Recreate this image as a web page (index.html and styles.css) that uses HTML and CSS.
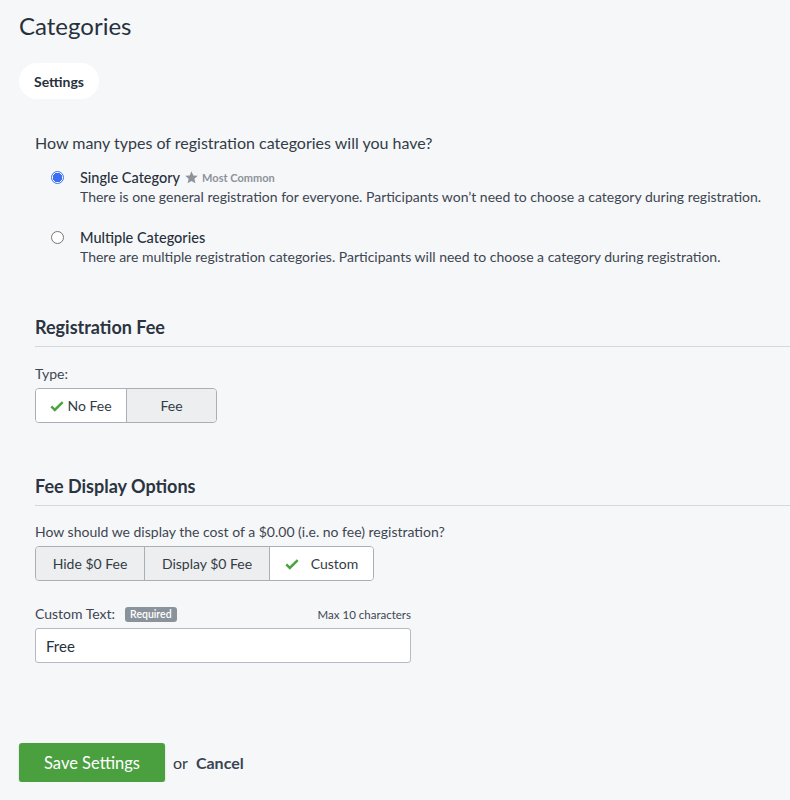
FILE: index.html
```html
<!DOCTYPE html>
<html>
<head>
<meta charset="utf-8">
<link rel="stylesheet" href="styles.css">
</head>
<body>
<div class="page">
  <h1 class="title">Categories</h1>
  <div class="tabs"><span class="tab">Settings</span></div>

  <div class="section">
    <p class="question">How many types of registration categories will you have?</p>
    <div class="options">
      <div class="option">
        <span class="radio checked"></span>
        <div class="option-text">
          <div class="option-label">Single Category
            <svg class="star" viewBox="0 0 24 24" width="15" height="15"><path d="M12 2l2.9 6.6 7.1.7-5.4 4.8 1.6 7-6.2-3.7-6.2 3.7 1.6-7L2 9.3l7.1-.7z" fill="#8d939a"/></svg><span class="common">Most Common</span></div>
          <div class="option-desc">There is one general registration for everyone. Participants won’t need to choose a category during registration.</div>
        </div>
      </div>
      <div class="option">
        <span class="radio"></span>
        <div class="option-text">
          <div class="option-label">Multiple Categories</div>
          <div class="option-desc">There are multiple registration categories. Participants will need to choose a category during registration.</div>
        </div>
      </div>
    </div>

    <h2 class="section-title fee-title">Registration Fee</h2>
    <div class="field-label type-label">Type:</div>
    <div class="btn-group">
      <span class="seg active seg-nofee"><svg class="check" viewBox="0 0 16 16" width="14" height="14"><path d="M1.5 8.5l4 4 9-9" fill="none" stroke="#4aa33e" stroke-width="2.8"/></svg>No Fee</span>
      <span class="seg seg-fee">Fee</span>
    </div>

    <h2 class="section-title display-title">Fee Display Options</h2>
    <div class="field-label">How should we display the cost of a $0.00 (i.e. no fee) registration?</div>
    <div class="btn-group">
      <span class="seg seg-hide">Hide $0 Fee</span>
      <span class="seg seg-display">Display $0 Fee</span>
      <span class="seg active seg-custom"><svg class="check check-wide" viewBox="0 0 16 16" width="14" height="14"><path d="M1.5 8.5l4 4 9-9" fill="none" stroke="#4aa33e" stroke-width="2.8"/></svg>Custom</span>
    </div>

    <div class="input-block">
      <div class="input-head">
        <span class="field-label">Custom Text:</span>
        <span class="badge">Required</span>
        <span class="max">Max 10 characters</span>
      </div>
      <div class="text-input">Free</div>
    </div>
  </div>

  <div class="actions">
    <span class="btn-save">Save Settings</span>
    <span class="or">or</span>
    <span class="cancel">Cancel</span>
  </div>
</div>
</body>
</html>
```

FILE: styles.css
```css
html, body {
  margin: 0;
  padding: 0;
  background: #f6f7f9;
}
body {
  font-family: Lato, "Open Sans", "Liberation Sans", sans-serif;
  color: #333c46;
}
.page {
  padding: 12px 0 0 19px;
}
.title {
  margin: 0;
  font-size: 24px;
  line-height: 28px;
  font-weight: 400;
  color: #27313c;
}
.tabs {
  margin-top: 23px;
  display: flex;
}
.tab {
  display: inline-flex;
  align-items: center;
  height: 36px;
  padding: 0 15px;
  background: #fff;
  border-radius: 18px;
  font-size: 14px;
  font-weight: 700;
  color: #27313c;
}
.section {
  padding-left: 16px;
}
.question {
  margin: 34px 0 0;
  font-size: 16px;
  line-height: 20px;
  color: #333c46;
}
.options {
  margin-top: 15px;
  display: flex;
  flex-direction: column;
  gap: 22px;
  padding-left: 16px;
}
.option {
  display: flex;
  align-items: flex-start;
  gap: 16px;
}
.radio {
  width: 11px;
  height: 11px;
  margin-top: 3px;
  border: 1px solid #767676;
  border-radius: 50%;
  background: #fff;
  box-sizing: content-box;
  flex: none;
}
.radio.checked {
  border-color: #3b6ef0;
  background: radial-gradient(circle, #3b6ef0 0 4.5px, #fff 5px);
}
.option-label {
  font-size: 14.5px;
  line-height: 19px;
  font-weight: 500;
  color: #27313c;
  display: flex;
  align-items: center;
}
.star {
  margin: 0 3px 0 4px;
}
.common {
  font-size: 11px;
  font-weight: 700;
  color: #8d939a;
}
.option-desc {
  font-size: 14px;
  line-height: 19px;
  color: #3d4651;
}
.section-title {
  margin: 0;
  font-size: 18px;
  line-height: 20px;
  font-weight: 700;
  color: #2b3440;
  padding-bottom: 9px;
  border-bottom: 1px solid #d3d8dd;
}
.fee-title {
  margin-top: 51px;
}
.display-title {
  margin-top: 53px;
}
.field-label {
  font-size: 14px;
  line-height: 18px;
  color: #3d4651;
}
.type-label {
  margin-top: 18px;
}
.display-title + .field-label {
  margin-top: 17px;
}
.btn-group {
  margin-top: 5px;
  display: inline-flex;
  height: 35px;
  border: 1px solid #a8afb6;
  border-radius: 4px;
  overflow: hidden;
  box-sizing: border-box;
}
.seg {
  display: flex;
  align-items: center;
  justify-content: center;
  background: #eceef0;
  font-size: 14px;
  color: #333c46;
  border-left: 1px solid #a8afb6;
}
.seg:first-child {
  border-left: none;
}
.seg.active {
  background: #fff;
}
.seg-nofee { width: 90px; }
.seg-fee { width: 89px; }
.seg-hide { width: 108px; }
.seg-display { width: 124px; }
.seg-custom { width: 103px; }
.check {
  margin-right: 3px;
}
.check-wide {
  margin-right: 12px;
}
.input-block {
  width: 376px;
  margin-top: 24px;
}
.input-head {
  display: flex;
  align-items: center;
  height: 18px;
}
.badge {
  margin-left: 10px;
  background: #8a939b;
  color: #fff;
  font-size: 10.5px;
  font-weight: 600;
  line-height: 15px;
  padding: 0 5px;
  border-radius: 3px;
}
.max {
  margin-left: auto;
  font-size: 11.5px;
  color: #3d4651;
}
.text-input {
  margin-top: 5px;
  height: 35px;
  box-sizing: border-box;
  border: 1px solid #b4bbc2;
  border-radius: 3px;
  background: #fff;
  padding: 0 10px;
  display: flex;
  align-items: center;
  font-size: 15px;
  color: #27313c;
}
.actions {
  margin-top: 80px;
  display: flex;
  align-items: center;
}
.btn-save {
  display: inline-flex;
  align-items: center;
  justify-content: center;
  width: 146px;
  height: 39px;
  box-sizing: border-box;
  background: #4a9f3f;
  border-radius: 3px;
  color: #fff;
  font-size: 16.5px;
  box-shadow: 0 1px 2px rgba(0,0,0,0.2);
}
.or {
  margin-left: 8px;
  font-size: 16px;
  color: #333c46;
}
.cancel {
  margin-left: 8px;
  font-size: 16px;
  font-weight: 700;
  color: #3a4553;
}
```
